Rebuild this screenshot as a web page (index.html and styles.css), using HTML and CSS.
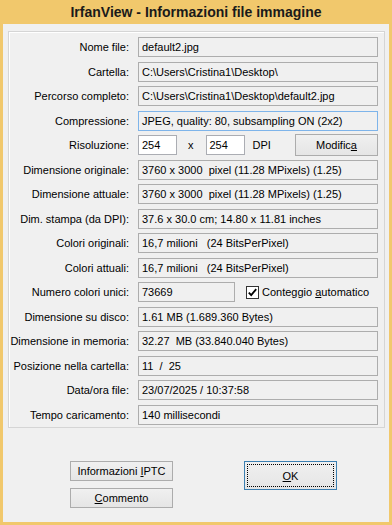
FILE: index.html
```html
<!DOCTYPE html>
<html lang="it">
<head>
  <meta charset="UTF-8" />
  <meta name="viewport" content="width=device-width, initial-scale=1" />
  <title>IrfanView - Informazioni file immagine</title>
  <link rel="stylesheet" href="styles.css">
</head>
<body>
  <div class="window">
    <div class="titlebar">IrfanView - Informazioni file immagine</div>

    <div class="client">
      <div class="group">
        <div class="row">
          <span class="label">Nome file:</span>
          <div class="field">default2.jpg</div>
        </div>
        <div class="row">
          <span class="label">Cartella:</span>
          <div class="field">C:\Users\Cristina1\Desktop\</div>
        </div>
        <div class="row">
          <span class="label">Percorso completo:</span>
          <div class="field">C:\Users\Cristina1\Desktop\default2.jpg</div>
        </div>
        <div class="row">
          <span class="label">Compressione:</span>
          <div class="field focused">JPEG, quality: 80, subsampling ON (2x2)</div>
        </div>
        <div class="row">
          <span class="label">Risoluzione:</span>
          <div class="res">
            <div class="input">254</div>
            <span class="times">x</span>
            <div class="input">254</div>
            <span class="unit">DPI</span>
            <button class="btn btn-modifica">Modific<u>a</u></button>
          </div>
        </div>
        <div class="row">
          <span class="label">Dimensione originale:</span>
          <div class="field">3760 x 3000&nbsp; pixel (11.28 MPixels) (1.25)</div>
        </div>
        <div class="row">
          <span class="label">Dimensione attuale:</span>
          <div class="field">3760 x 3000&nbsp; pixel (11.28 MPixels) (1.25)</div>
        </div>
        <div class="row">
          <span class="label">Dim. stampa (da DPI):</span>
          <div class="field">37.6 x 30.0 cm; 14.80 x 11.81 inches</div>
        </div>
        <div class="row">
          <span class="label">Colori originali:</span>
          <div class="field">16,7 milioni&nbsp;&nbsp; (24 BitsPerPixel)</div>
        </div>
        <div class="row">
          <span class="label">Colori attuali:</span>
          <div class="field">16,7 milioni&nbsp;&nbsp; (24 BitsPerPixel)</div>
        </div>
        <div class="row">
          <span class="label">Numero colori unici:</span>
          <div class="field field-short">73669</div>
          <label class="check">
            <svg width="13" height="13" viewBox="0 0 13 13">
              <rect x="0.5" y="0.5" width="12" height="12" fill="#fff" stroke="#333"/>
              <path d="M2.8 6.6 L5.2 9.2 L10.2 3.2" fill="none" stroke="#000" stroke-width="1.8"/>
            </svg>
            <span>Conteggio <u>a</u>utomatico</span>
          </label>
        </div>
        <div class="row">
          <span class="label">Dimensione su disco:</span>
          <div class="field">1.61 MB (1.689.360 Bytes)</div>
        </div>
        <div class="row">
          <span class="label">Dimensione in memoria:</span>
          <div class="field">32.27&nbsp; MB (33.840.040 Bytes)</div>
        </div>
        <div class="row">
          <span class="label">Posizione nella cartella:</span>
          <div class="field">11&nbsp; /&nbsp; 25</div>
        </div>
        <div class="row">
          <span class="label">Data/ora file:</span>
          <div class="field">23/07/2025 / 10:37:58</div>
        </div>
        <div class="row">
          <span class="label">Tempo caricamento:</span>
          <div class="field">140 millisecondi</div>
        </div>
      </div>

      <div class="buttons">
        <div class="btn-col">
          <button class="btn btn-wide">Informazioni <u>I</u>PTC</button>
          <button class="btn btn-wide"><u>C</u>ommento</button>
        </div>
        <button class="btn btn-ok"><span class="focus-rect"><u>O</u>K</span></button>
      </div>
    </div>
  </div>
</body>
</html>
```

FILE: styles.css
```css
* {
  box-sizing: border-box;
}
body {
  margin: 0;
  background: #f0f0f0;
  font-family: 'Liberation Sans', Arial, sans-serif;
  font-size: 11px;
  color: #000;
}

/* Window frame */
.window {
  width: 392px;
  height: 525px;
  background: #f1c86c;
  padding: 0 3px 3px;
  display: flex;
  flex-direction: column;
}

.titlebar {
  height: 24px;
  line-height: 25px;
  text-align: center;
  font-weight: 700;
  font-size: 14px;
  color: #1a1a1a;
}

.client {
  flex: 1;
  background: #f0f0f0;
  padding: 7px 0 0 5px;
}

/* Group box with all the rows */
.group {
  width: 377px;
  border: 1px solid #d5d5d5;
  box-shadow: inset 1px 1px 0 #fff;
  padding: 5px 6px 2px 0;
  display: flex;
  flex-direction: column;
}

.row {
  display: flex;
  align-items: center;
  height: 20px;
}
.row:nth-child(even) {
  margin-top: 5px;
}
.row:nth-child(odd) {
  margin-top: 4px;
}
.row:first-child {
  margin-top: 0;
}

.label {
  width: 120px;
  margin-right: 9px;
  text-align: right;
  white-space: nowrap;
}

.field {
  width: 240px;
  height: 20px;
  line-height: 18px;
  border: 1px solid #adadad;
  background: #f0f0f0;
  padding: 0 3px;
  white-space: nowrap;
  overflow: hidden;
}
.field.focused {
  border-color: #7eb4ea;
}
.field-short {
  width: 97px;
}

/* Risoluzione row */
.res {
  width: 240px;
  display: flex;
  align-items: center;
}
.input {
  width: 39px;
  height: 20px;
  line-height: 18px;
  border: 1px solid #abadb3;
  background: #fff;
  padding: 0 3px;
}
.times {
  margin: 0 12px 0 11px;
}
.unit {
  margin-left: 8px;
}

/* Checkbox */
.check {
  display: flex;
  align-items: center;
  margin-left: 11px;
  gap: 3px;
}
.check svg {
  display: block;
}

/* Buttons */
.btn {
  font-family: inherit;
  font-size: 11px;
  color: #000;
  background: linear-gradient(#f0f0f0, #e5e5e5);
  border: 1px solid #acacac;
  padding: 0;
  height: 20px;
  cursor: pointer;
}
.btn-modifica {
  width: 83px;
  height: 22px;
  margin-left: auto;
}

.buttons {
  display: flex;
  align-items: flex-start;
  padding: 33px 0 0 62px;
  gap: 71px;
}
.btn-col {
  display: flex;
  flex-direction: column;
  gap: 7px;
}
.btn-wide {
  width: 103px;
}
.btn-ok {
  width: 93px;
  height: 29px;
  border-color: #3c7fb1;
  padding: 2px;
}
.focus-rect {
  display: flex;
  align-items: center;
  justify-content: center;
  height: 100%;
  border: 1px dotted #000;
}
```
